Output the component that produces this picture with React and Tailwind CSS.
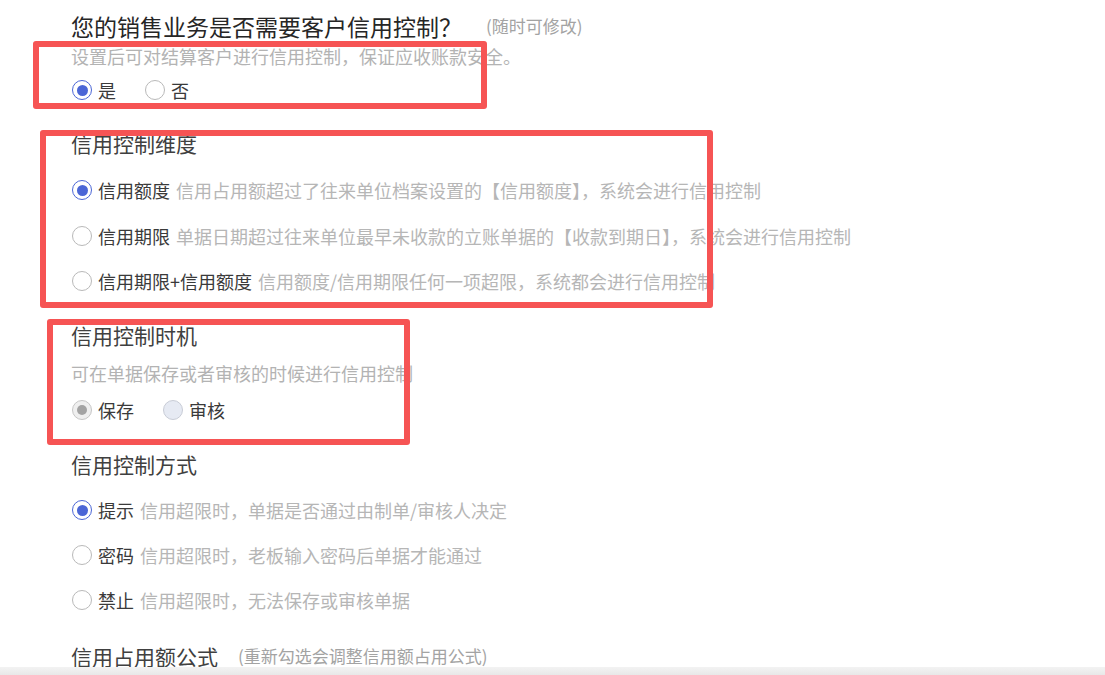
import React from "react";

function Radio({ state = "off" }) {
  if (state === "on") {
    return (
      <span className="flex h-[20px] w-[20px] shrink-0 items-center justify-center rounded-full border border-[#4b66d6] bg-white">
        <span className="h-[11px] w-[11px] rounded-full bg-[#4b66d6]" />
      </span>
    );
  }
  if (state === "disabledOn") {
    return (
      <span className="flex h-[20px] w-[20px] shrink-0 items-center justify-center rounded-full border border-[#c6c6c6] bg-[#efefef]">
        <span className="h-[10px] w-[10px] rounded-full bg-[#a3a3a3]" />
      </span>
    );
  }
  if (state === "disabledOff") {
    return <span className="h-[20px] w-[20px] shrink-0 rounded-full border border-[#c8ccd6] bg-[#e6eaf3]" />;
  }
  return <span className="h-[20px] w-[20px] shrink-0 rounded-full border border-[#b9b9b9] bg-white" />;
}

function Option({ state, label, desc, className = "" }) {
  return (
    <div className={`flex h-[28px] items-center pl-[1px] ${className}`}>
      <Radio state={state} />
      <span className="ml-[6px] text-[18px] text-[#3a3a3a]">{label}</span>
      {desc && <span className="ml-[6px] text-[18px] text-[#b6b6b6]">{desc}</span>}
    </div>
  );
}

function Heading({ children, note, className = "" }) {
  return (
    <div className={`flex h-[28px] items-center whitespace-nowrap ${className}`}>
      <span className="text-[21px] text-[#404040]">{children}</span>
      {note && <span className="ml-[20px] text-[17px] text-[#a3a3a3]">{note}</span>}
    </div>
  );
}

export default function App() {
  return (
    <div className="relative h-[675px] w-[1105px] overflow-hidden bg-white font-['Noto_Sans_CJK_SC','Noto_Sans',sans-serif] leading-[28px]">
      <div className="whitespace-nowrap pl-[71px] pt-[12px]">
        <div className="flex h-[28px] items-center">
          <span className="text-[23px] text-[#262626]">您的销售业务是否需要客户信用控制？</span>
          <span className="ml-[24px] text-[17px] text-[#a3a3a3]">(随时可修改)</span>
        </div>
        <div className="mt-[4px] flex h-[24px] items-center text-[18px] leading-[24px] text-[#b3b3b3]">
          设置后可对结算客户进行信用控制，保证应收账款安全。
        </div>
        <div className="mt-[8px] flex h-[28px] items-center">
          <Option state="on" label="是" />
          <Option state="off" label="否" className="ml-[28px]" />
        </div>

        <Heading className="mt-[25px]">信用控制维度</Heading>
        <Option
          className="mt-[19px]"
          state="on"
          label="信用额度"
          desc="信用占用额超过了往来单位档案设置的【信用额度】，系统会进行信用控制"
        />
        <Option
          className="mt-[18px]"
          state="off"
          label="信用期限"
          desc="单据日期超过往来单位最早未收款的立账单据的【收款到期日】，系统会进行信用控制"
        />
        <Option
          className="mt-[17px]"
          state="off"
          label="信用期限+信用额度"
          desc="信用额度/信用期限任何一项超限，系统都会进行信用控制"
        />

        <Heading className="mt-[26px]">信用控制时机</Heading>
        <div className="mt-[10px] flex h-[28px] items-center text-[18px] text-[#b3b3b3]">
          可在单据保存或者审核的时候进行信用控制
        </div>
        <div className="mt-[9px] flex h-[28px] items-center">
          <Option state="disabledOn" label="保存" />
          <Option state="disabledOff" label="审核" className="ml-[28px]" />
        </div>

        <Heading className="mt-[26px]">信用控制方式</Heading>
        <Option className="mt-[18px]" state="on" label="提示" desc="信用超限时，单据是否通过由制单/审核人决定" />
        <Option className="mt-[17px]" state="off" label="密码" desc="信用超限时，老板输入密码后单据才能通过" />
        <Option className="mt-[17px]" state="off" label="禁止" desc="信用超限时，无法保存或审核单据" />

        <Heading className="mt-[28px]" note="(重新勾选会调整信用额占用公式)">
          信用占用额公式
        </Heading>
      </div>

      {/* annotation boxes */}
      <div className="pointer-events-none absolute left-[33px] top-[41px] h-[68px] w-[454px] rounded-[3px] border-[6px] border-[#f65454]" />
      <div className="pointer-events-none absolute left-[40px] top-[130px] h-[178px] w-[673px] rounded-[3px] border-[6px] border-[#f65454]" />
      <div className="pointer-events-none absolute left-[47px] top-[319px] h-[126px] w-[363px] rounded-[3px] border-[6px] border-[#f65454]" />

      {/* bottom band */}
      <div className="absolute bottom-0 left-0 h-[8px] w-full bg-gradient-to-b from-[#f3f3f3] to-[#e8e8e8]" />
    </div>
  );
}
